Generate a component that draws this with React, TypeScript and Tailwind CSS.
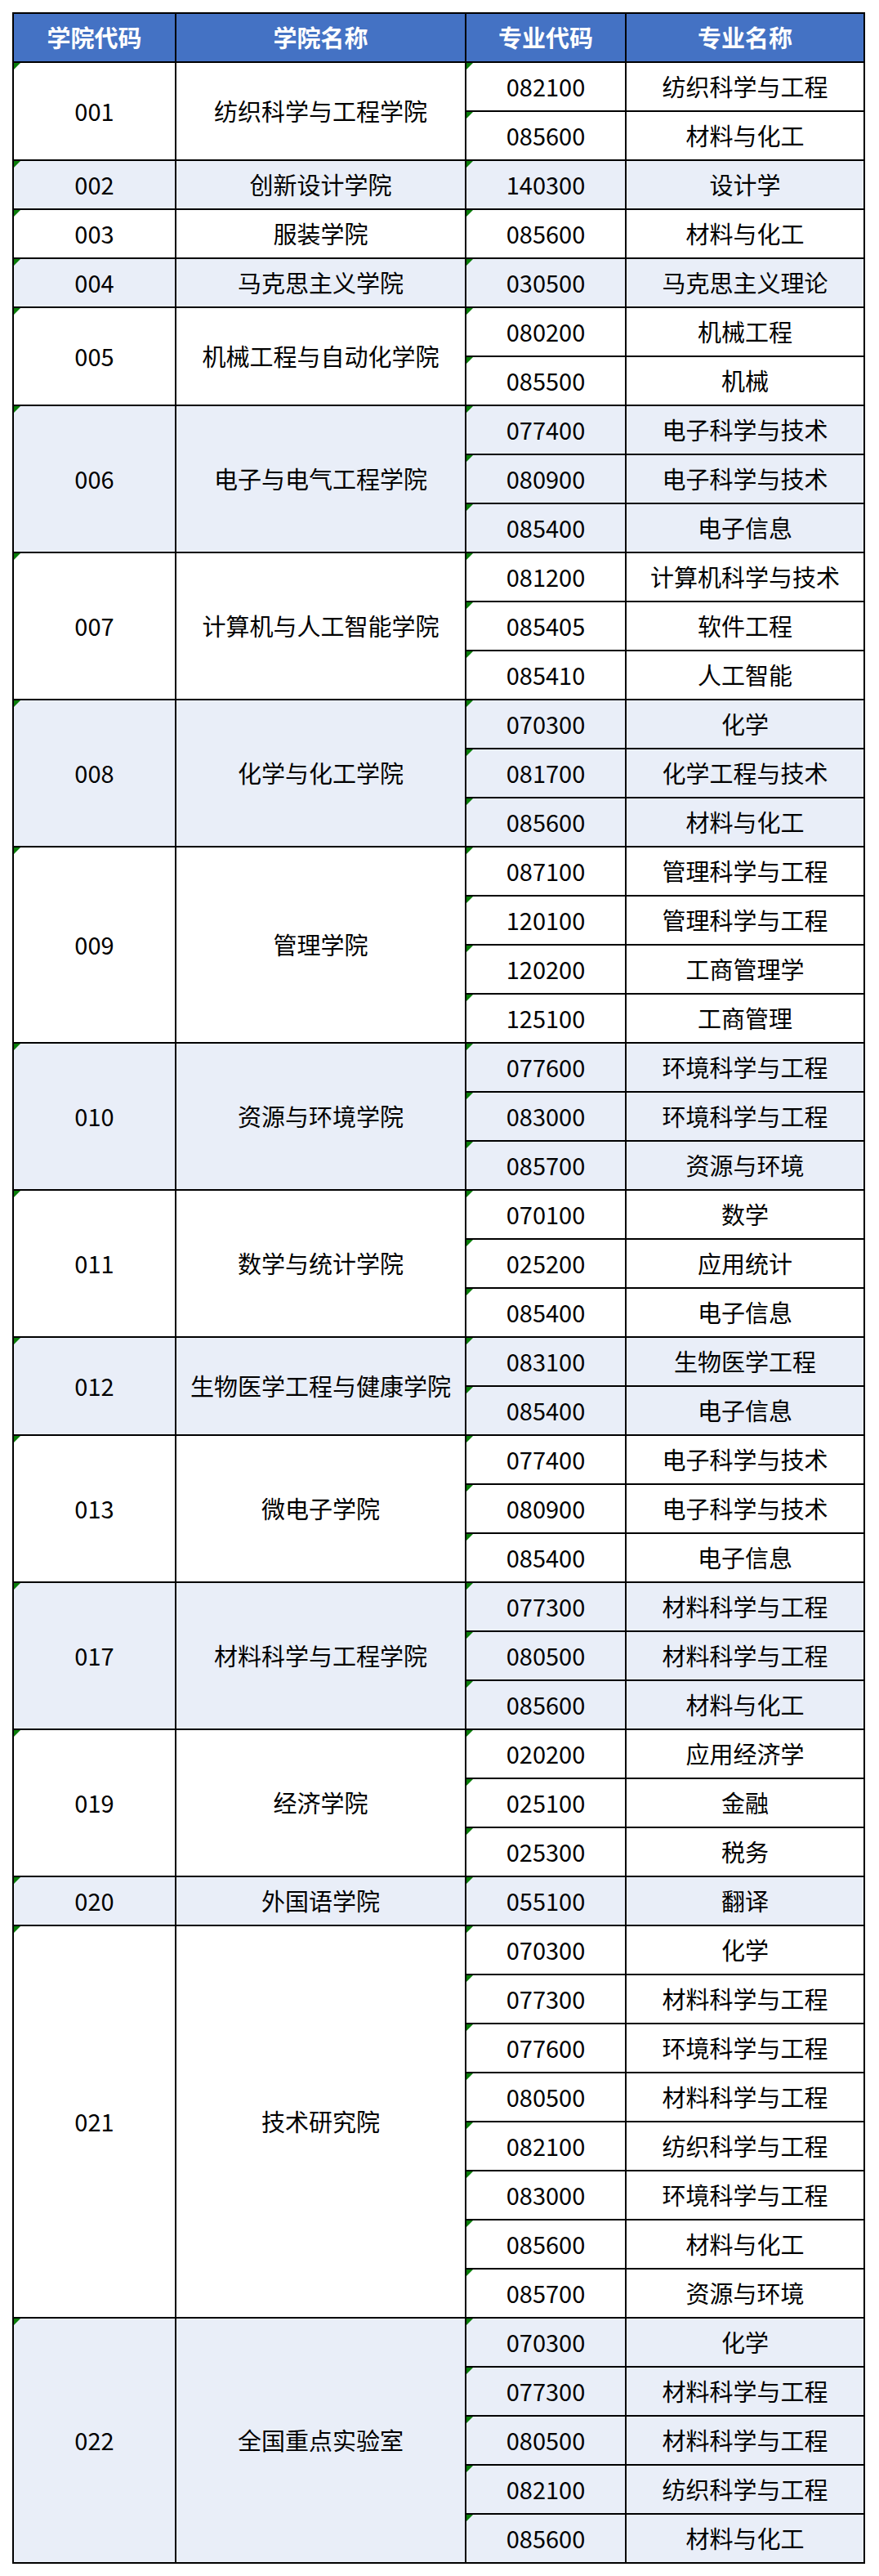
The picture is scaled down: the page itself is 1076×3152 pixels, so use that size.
import React from "react";

type Major = { code: string; name: string };
type School = { code: string; name: string; majors: Major[] };

const schools: School[] = [
  { code: "001", name: "纺织科学与工程学院", majors: [
    { code: "082100", name: "纺织科学与工程" },
    { code: "085600", name: "材料与化工" },
  ] },
  { code: "002", name: "创新设计学院", majors: [{ code: "140300", name: "设计学" }] },
  { code: "003", name: "服装学院", majors: [{ code: "085600", name: "材料与化工" }] },
  { code: "004", name: "马克思主义学院", majors: [{ code: "030500", name: "马克思主义理论" }] },
  { code: "005", name: "机械工程与自动化学院", majors: [
    { code: "080200", name: "机械工程" },
    { code: "085500", name: "机械" },
  ] },
  { code: "006", name: "电子与电气工程学院", majors: [
    { code: "077400", name: "电子科学与技术" },
    { code: "080900", name: "电子科学与技术" },
    { code: "085400", name: "电子信息" },
  ] },
  { code: "007", name: "计算机与人工智能学院", majors: [
    { code: "081200", name: "计算机科学与技术" },
    { code: "085405", name: "软件工程" },
    { code: "085410", name: "人工智能" },
  ] },
  { code: "008", name: "化学与化工学院", majors: [
    { code: "070300", name: "化学" },
    { code: "081700", name: "化学工程与技术" },
    { code: "085600", name: "材料与化工" },
  ] },
  { code: "009", name: "管理学院", majors: [
    { code: "087100", name: "管理科学与工程" },
    { code: "120100", name: "管理科学与工程" },
    { code: "120200", name: "工商管理学" },
    { code: "125100", name: "工商管理" },
  ] },
  { code: "010", name: "资源与环境学院", majors: [
    { code: "077600", name: "环境科学与工程" },
    { code: "083000", name: "环境科学与工程" },
    { code: "085700", name: "资源与环境" },
  ] },
  { code: "011", name: "数学与统计学院", majors: [
    { code: "070100", name: "数学" },
    { code: "025200", name: "应用统计" },
    { code: "085400", name: "电子信息" },
  ] },
  { code: "012", name: "生物医学工程与健康学院", majors: [
    { code: "083100", name: "生物医学工程" },
    { code: "085400", name: "电子信息" },
  ] },
  { code: "013", name: "微电子学院", majors: [
    { code: "077400", name: "电子科学与技术" },
    { code: "080900", name: "电子科学与技术" },
    { code: "085400", name: "电子信息" },
  ] },
  { code: "017", name: "材料科学与工程学院", majors: [
    { code: "077300", name: "材料科学与工程" },
    { code: "080500", name: "材料科学与工程" },
    { code: "085600", name: "材料与化工" },
  ] },
  { code: "019", name: "经济学院", majors: [
    { code: "020200", name: "应用经济学" },
    { code: "025100", name: "金融" },
    { code: "025300", name: "税务" },
  ] },
  { code: "020", name: "外国语学院", majors: [{ code: "055100", name: "翻译" }] },
  { code: "021", name: "技术研究院", majors: [
    { code: "070300", name: "化学" },
    { code: "077300", name: "材料科学与工程" },
    { code: "077600", name: "环境科学与工程" },
    { code: "080500", name: "材料科学与工程" },
    { code: "082100", name: "纺织科学与工程" },
    { code: "083000", name: "环境科学与工程" },
    { code: "085600", name: "材料与化工" },
    { code: "085700", name: "资源与环境" },
  ] },
  { code: "022", name: "全国重点实验室", majors: [
    { code: "070300", name: "化学" },
    { code: "077300", name: "材料科学与工程" },
    { code: "080500", name: "材料科学与工程" },
    { code: "082100", name: "纺织科学与工程" },
    { code: "085600", name: "材料与化工" },
  ] },
];

// excel's "number stored as text" marker
function Flag() {
  return (
    <span className="absolute left-0 top-0 h-0 w-0 border-t-[8px] border-r-[8px] border-t-[#0a7d0a] border-r-transparent" />
  );
}

const cell = "border-2 border-black text-center align-middle";

export default function App() {
  return (
    <div
      className="min-h-screen bg-white pl-[15px] pt-[15px] text-[29px] text-black"
      style={{ fontFamily: '"Noto Sans CJK SC", "Noto Sans", sans-serif' }}
    >
      <table className="table-fixed border-collapse">
        <colgroup>
          <col className="w-[199px]" />
          <col className="w-[355px]" />
          <col className="w-[196px]" />
          <col className="w-[292px]" />
        </colgroup>
        <thead>
          <tr className="h-[60px] bg-[#4472c4] font-bold text-white">
            <th className={cell}>学院代码</th>
            <th className={cell}>学院名称</th>
            <th className={cell}>专业代码</th>
            <th className={cell}>专业名称</th>
          </tr>
        </thead>
        <tbody>
          {schools.map((s, i) => {
            const bg = i % 2 === 1 ? "bg-[#e9eef8]" : "bg-white";
            return s.majors.map((m, j) => (
              <tr key={s.code + m.code + j} className={`h-[60px] ${bg}`}>
                {j === 0 && (
                  <>
                    <td rowSpan={s.majors.length} className={`${cell} relative`}>
                      <Flag />
                      {s.code}
                    </td>
                    <td rowSpan={s.majors.length} className={cell}>
                      {s.name}
                    </td>
                  </>
                )}
                <td className={`${cell} relative`}>
                  <Flag />
                  {m.code}
                </td>
                <td className={cell}>{m.name}</td>
              </tr>
            ));
          })}
        </tbody>
      </table>
    </div>
  );
}
